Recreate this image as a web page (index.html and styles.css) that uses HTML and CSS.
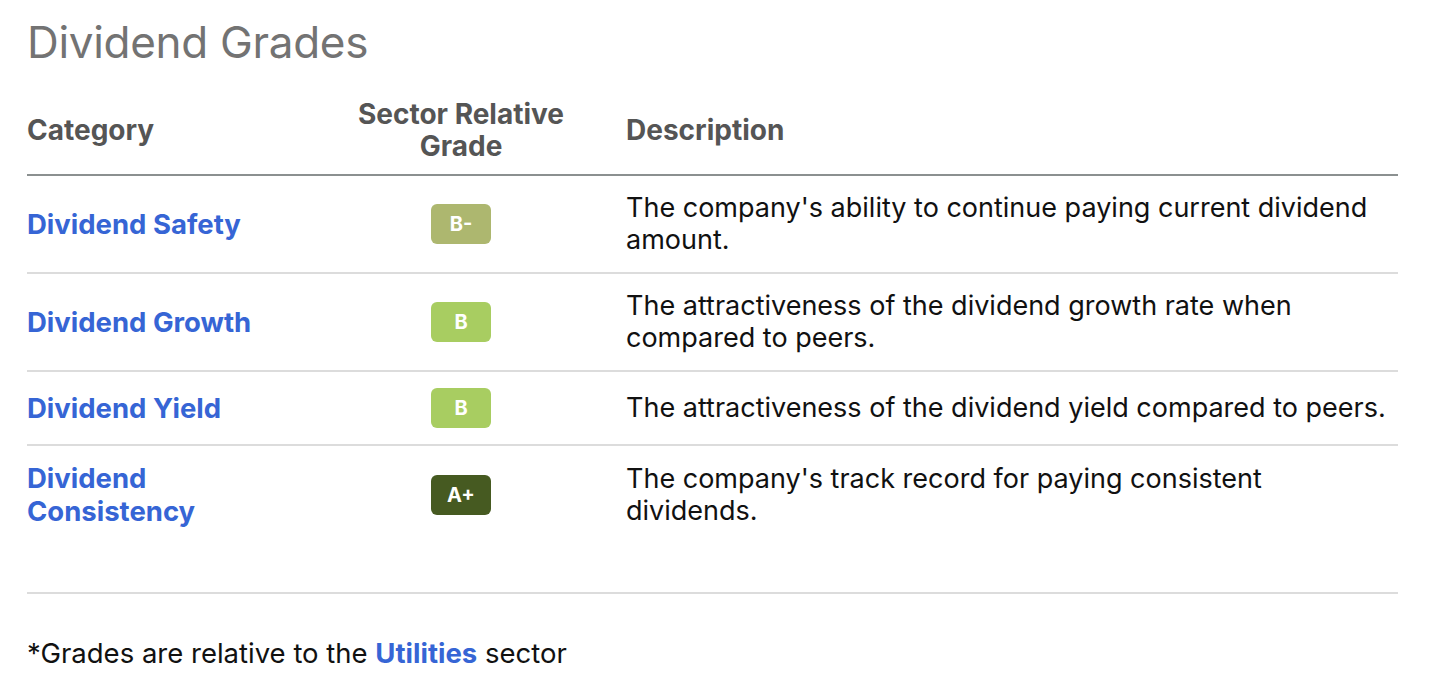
FILE: index.html
```html
<!DOCTYPE html>
<html>
<head>
<meta charset="utf-8">
<link rel="stylesheet" href="styles.css">
</head>
<body>
<main class="page">
  <h1 class="title">Dividend Grades</h1>
  <table class="grades">
    <colgroup>
      <col class="c-cat">
      <col class="c-grade">
      <col class="c-desc">
    </colgroup>
    <thead>
      <tr>
        <th class="cat">Category</th>
        <th class="grade">Sector Relative<br>Grade</th>
        <th class="desc">Description</th>
      </tr>
    </thead>
    <tbody>
      <tr>
        <td class="cat"><a href="#">Dividend Safety</a></td>
        <td class="grade"><span class="badge b-minus">B-</span></td>
        <td class="desc">The company's ability to continue paying current dividend amount.</td>
      </tr>
      <tr>
        <td class="cat"><a href="#">Dividend Growth</a></td>
        <td class="grade"><span class="badge b">B</span></td>
        <td class="desc">The attractiveness of the dividend growth rate when compared to peers.</td>
      </tr>
      <tr>
        <td class="cat"><a href="#">Dividend Yield</a></td>
        <td class="grade"><span class="badge b">B</span></td>
        <td class="desc">The attractiveness of the dividend yield compared to peers.</td>
      </tr>
      <tr class="last">
        <td class="cat"><a href="#">Dividend<br>Consistency</a></td>
        <td class="grade"><span class="badge a-plus">A+</span></td>
        <td class="desc">The company's track record for paying consistent dividends.</td>
      </tr>
    </tbody>
  </table>
  <hr class="rule">
  <p class="note">*Grades are relative to the <a href="#">Utilities</a> sector</p>
</main>
</body>
</html>
```

FILE: styles.css
```css
html, body {
  margin: 0;
  padding: 0;
  background: #ffffff;
}

body {
  font-family: Inter, "Noto Sans", "Liberation Sans", sans-serif;
  color: #111111;
}

.page {
  padding: 18px 34px 0 27px;
}

.title {
  margin: 0;
  font-size: 44px;
  line-height: 48px;
  font-weight: 400;
  color: #737373;
  letter-spacing: -0.3px;
}

.grades {
  width: 100%;
  margin-top: 32px;
  border-collapse: collapse;
  table-layout: fixed;
}

.c-cat { width: 312px; }
.c-grade { width: 244px; }

.grades th {
  font-size: 28px;
  line-height: 32px;
  font-weight: 700;
  color: #555555;
  padding: 0 0 12px 0;
  border-bottom: 2px solid #8b9090;
  vertical-align: middle;
  text-align: left;
}

.grades th.grade {
  text-align: center;
}

.grades td {
  font-size: 27px;
  line-height: 32px;
  padding: 16px 0;
  border-bottom: 2px solid #dcdcdc;
  vertical-align: middle;
}

.grades tr.last td {
  border-bottom: none;
}

.grades td.cat a {
  color: #3665d5;
  font-weight: 700;
  font-size: 27.5px;
  text-decoration: none;
}

.grades td.grade {
  text-align: center;
}

.grades th.desc,
.grades td.desc {
  padding-left: 43px;
}

.badge {
  display: inline-flex;
  align-items: center;
  justify-content: center;
  width: 60px;
  height: 40px;
  border-radius: 6px;
  color: #ffffff;
  font-size: 20px;
  font-weight: 700;
  vertical-align: middle;
}

.b-minus { background: #adb76f; }
.b { background: #a8cd61; }
.a-plus { background: #465a21; }

.rule {
  margin: 48px 0 0 0;
  border: none;
  border-top: 2px solid #dcdcdc;
  height: 0;
}

.note {
  margin: 43px 0 0 0;
  font-size: 27.5px;
  line-height: 32px;
}

.note a {
  color: #3665d5;
  font-weight: 700;
  text-decoration: none;
}
```
